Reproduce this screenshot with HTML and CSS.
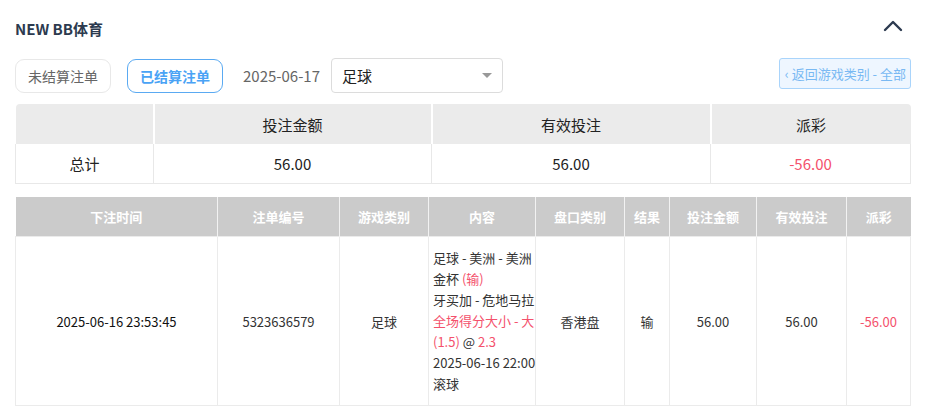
FILE: index.html
```html
<!DOCTYPE html>
<html lang="zh">
<head>
<meta charset="utf-8">
<link rel="stylesheet" href="styles.css">
</head>
<body>
<div class="page">
  <div class="title-bar">
    <div class="title">NEW BB体育</div>
    <svg class="chev" width="20" height="12" viewBox="0 0 20 12"><path d="M2 10 L10 2 L18 10" fill="none" stroke="#2c3a4f" stroke-width="2.4" stroke-linecap="round" stroke-linejoin="round"/></svg>
  </div>
  <div class="toolbar">
    <button class="tab">未结算注单</button>
    <button class="tab active">已结算注单</button>
    <span class="date">2025-06-17</span>
    <div class="select"><span>足球</span><i class="caret"></i></div>
    <div class="spacer"></div>
    <button class="back">‹ 返回游戏类别 - 全部</button>
  </div>
  <table class="summary">
    <colgroup><col style="width:138px"><col style="width:278px"><col style="width:279px"><col></colgroup>
    <thead><tr><th></th><th>投注金额</th><th>有效投注</th><th>派彩</th></tr></thead>
    <tbody><tr><td>总计</td><td>56.00</td><td>56.00</td><td class="neg">-56.00</td></tr></tbody>
  </table>
  <table class="detail">
    <colgroup>
      <col style="width:202px"><col style="width:122px"><col style="width:89px"><col style="width:107px"><col style="width:89px"><col style="width:45px"><col style="width:87px"><col style="width:90px"><col>
    </colgroup>
    <thead><tr><th>下注时间</th><th>注单编号</th><th>游戏类别</th><th>内容</th><th>盘口类别</th><th>结果</th><th>投注金额</th><th>有效投注</th><th>派彩</th></tr></thead>
    <tbody><tr>
      <td class="dark">2025-06-16 23:53:45</td>
      <td>5323636579</td>
      <td>足球</td>
      <td class="content">足球 - 美洲 - 美洲金杯 <span class="neg">(输)</span><br>牙买加 - 危地马拉<br><span class="neg">全场得分大小 - 大 (1.5)</span> @ <span class="neg">2.3</span><br><span class="nw">2025-06-16 22:00</span><br>滚球</td>
      <td>香港盘</td>
      <td>输</td>
      <td>56.00</td>
      <td>56.00</td>
      <td class="neg">-56.00</td>
    </tr></tbody>
  </table>
</div>
</body>
</html>
```

FILE: styles.css
```css
* { box-sizing: border-box; }
html, body { margin: 0; padding: 0; background: #fff; }
body { font-family: "Noto Sans CJK SC", "Noto Sans", sans-serif; color: #333; }
.page { padding: 0 15px; width: 926px; }
.title-bar { display: flex; align-items: center; justify-content: space-between; height: 58px; padding-bottom: 2px; }
.title { font-size: 15px; font-weight: 700; color: #2c3a4f; }
.chev { margin-right: 8px; margin-top: -4px; }
.toolbar { display: flex; align-items: center; height: 35px; }
.tab { height: 34px; width: 96px; border: 1px solid #e8e8e8; border-radius: 9px; background: #fff; color: #666; font: inherit; font-size: 14px; margin-right: 16px; padding: 0; }
.tab.active { border-color: #5aaaf2; color: #4aa3f5; font-weight: 700; margin-right: 20px; }
.date { font-size: 15px; color: #666; margin-right: 11px; }
.select { width: 172px; height: 35px; border: 1px solid #dcdcdc; border-radius: 4px; display: flex; align-items: center; justify-content: space-between; padding: 0 10px 0 10px; font-size: 15px; color: #222; }
.caret { width: 0; height: 0; border-left: 5px solid transparent; border-right: 5px solid transparent; border-top: 5px solid #999; }
.spacer { flex: 1; }
.back { height: 31px; align-self: flex-start; border: 1px solid #a9d4fb; border-radius: 3px; background: #eef6ff; color: #79b9f3; font: inherit; font-size: 13px; padding: 0 4px 0 5px; white-space: nowrap; }
table { border-collapse: collapse; width: 896px; table-layout: fixed; }
.summary { margin-top: 11px; }
.summary th { background: #ebebeb; height: 40px; font-weight: 400; font-size: 15px; color: #222; border-left: 2px solid #fff; }
.summary th:first-child { border-left: none; border-top-left-radius: 4px; }
.summary th:last-child { border-top-right-radius: 4px; }
.summary td { height: 39px; text-align: center; font-size: 15px; color: #222; border: 1px solid #e8e8e8; border-top: none; }
.neg { color: #f4516c; }
.summary td.neg { color: #f4516c; }
.detail { margin-top: 13px; }
.detail th { background: #cbcbcb; color: #fff; font-size: 13px; font-weight: 700; height: 40px; border-left: 1px solid #f2f2f2; }
.detail th:first-child { border-left: none; }
.detail td { border: 1px solid #ebebeb; text-align: center; font-size: 13px; color: #333; height: 169px; }
.detail td.dark { color: #111; }
.detail td.content { text-align: left; padding: 8px 0 10px 4px; line-height: 21px; }
.detail td.neg { color: #f4516c; }
.nw { white-space: nowrap; }
```
